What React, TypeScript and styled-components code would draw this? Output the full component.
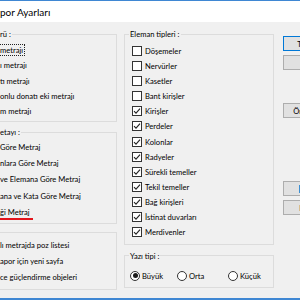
import styled, { createGlobalStyle } from 'styled-components';

const GlobalStyle = createGlobalStyle`
	html, body {
		margin: 0;
		padding: 0;
		overflow: hidden;
		background: #f0f0f0;
	}
	#root {
		width: 300px;
		height: 300px;
		overflow: hidden;
	}
`;

const Window = styled.div`
	width: 300px;
	height: 300px;
	box-sizing: border-box;
	display: flex;
	flex-direction: column;
	overflow: hidden;
	background: #f0f0f0;
	border-top: 1px solid #3f87d3;
	border-bottom: 2px solid #3f87d3;
	font-family: Lato, 'Noto Sans', sans-serif;
	font-size: 7.6px;
	color: #000;
`;

const TitleBar = styled.div`
	height: 21px;
	flex-shrink: 0;
	display: flex;
	align-items: center;
	background: #fff;
	font-size: 10px;
	white-space: nowrap;
`;

const Body = styled.div`
	flex: 1;
	display: flex;
	align-items: flex-start;
	padding-top: 7px;
`;

const LeftCol = styled.div`
	width: 129px;
	margin-left: -12px;
	flex-shrink: 0;
	display: flex;
	flex-direction: column;
`;

const MidCol = styled.div`
	width: 150px;
	margin-left: 7px;
	flex-shrink: 0;
	display: flex;
	flex-direction: column;
`;

const ButtonCol = styled.div`
	margin-left: 9px;
	padding-top: 7px;
	flex-shrink: 0;
	display: flex;
	flex-direction: column;
`;

const Group = styled.fieldset<{ $pt: number; $pb: number; $pl: number; $mt?: number }>`
	margin: ${(p) => p.$mt ?? 0}px 0 0 0;
	padding: ${(p) => p.$pt}px 0 ${(p) => p.$pb}px ${(p) => p.$pl}px;
	min-width: 0;
	border: 1px solid #dcdcdc;
	box-sizing: border-box;
`;

const Legend = styled.legend<{ $ml?: number }>`
	padding: 0 1px;
	margin-left: ${(p) => p.$ml ?? 0}px;
	line-height: 10px;
	white-space: nowrap;
`;

const Row = styled.div<{ $h: number }>`
	height: ${(p) => p.$h}px;
	display: flex;
	align-items: center;
	gap: 3px;
	white-space: nowrap;
`;

const Focused = styled.span`
	outline: 1px dotted #222;
	outline-offset: 0;
	line-height: 10px;
	padding-right: 1px;
`;

const Marked = styled.span`
	position: relative;
	&::after {
		content: '';
		position: absolute;
		left: 0;
		right: -3px;
		bottom: -3px;
		height: 2px;
		background: #e3141b;
	}
`;

const Box = styled.span`
	width: 10px;
	height: 10px;
	box-sizing: border-box;
	border: 1px solid #333;
	background: #fff;
	flex-shrink: 0;
	display: flex;
`;

const Radio = styled.span`
	width: 10px;
	height: 10px;
	box-sizing: border-box;
	border: 1px solid #333;
	border-radius: 50%;
	background: #fff;
	flex-shrink: 0;
	display: flex;
	align-items: center;
	justify-content: center;
`;

const Dot = styled.span`
	width: 5px;
	height: 5px;
	border-radius: 50%;
	background: #1a1a1a;
`;

const RadioRow = styled.div`
	height: 14px;
	display: flex;
	align-items: center;
	white-space: nowrap;
`;

const RadioItem = styled.label<{ $w: number }>`
	width: ${(p) => p.$w}px;
	display: flex;
	align-items: center;
	gap: 2px;
`;

const Button = styled.div<{ $default?: boolean; $mt: number; $start?: boolean }>`
	width: 52px;
	height: 15px;
	margin-top: ${(p) => p.$mt}px;
	box-sizing: border-box;
	display: flex;
	align-items: center;
	justify-content: ${(p) => (p.$start ? 'flex-start' : 'center')};
	padding-left: ${(p) => (p.$start ? 15 : 0)}px;
	gap: 2px;
	background: #e1e1e1;
	border: 1px solid ${(p) => (p.$default ? '#0078d7' : '#adadad')};
	white-space: nowrap;
`;

function Check() {
	return (
		<svg width="8" height="8" viewBox="0 0 8 8">
			<path d="M1 4.2 L3 6.2 L7 1.6" fill="none" stroke="#222" strokeWidth="1.1" />
		</svg>
	);
}

const reportTypes = ['ı metrajı', 'tı metrajı', 'onlu donatı eki metrajı', 'm metrajı'];
const details = ['Göre Metraj', 'nlara Göre Metraj', 've Elemana Göre Metraj', 'ana ve Kata Göre Metraj'];
const options = ['lı metrajda poz listesi', 'apor için yeni sayfa', 'ce güçlendirme objeleri'];

const elements: [string, boolean][] = [
	['Döşemeler', false],
	['Nervürler', false],
	['Kasetler', false],
	['Bant kirişler', false],
	['Kirişler', true],
	['Perdeler', true],
	['Kolonlar', true],
	['Radyeler', true],
	['Sürekli temeller', true],
	['Tekil temeller', true],
	['Bağ kirişleri', true],
	['İstinat duvarları', true],
	['Merdivenler', true],
];

export default function App() {
	return (
		<Window>
			<GlobalStyle />
			<TitleBar>por Ayarları</TitleBar>
			<Body>
				<LeftCol>
					<Group $pt={3.3} $pb={2.2} $pl={11}>
						<Legend $ml={-1}>rü :</Legend>
						<Row $h={15.3}>
							<Focused>metrajı</Focused>
						</Row>
						{reportTypes.map((t) => (
							<Row key={t} $h={15.3}>
								{t}
							</Row>
						))}
					</Group>
					<Group $pt={1.4} $pb={3} $pl={11} $mt={5.5}>
						<Legend $ml={-1}>etayı :</Legend>
						{details.map((t) => (
							<Row key={t} $h={16.2}>
								{t}
							</Row>
						))}
						<Row $h={16.2}>
							<Marked>ği Metraj</Marked>
						</Row>
					</Group>
					<Group $pt={4} $pb={4} $pl={11} $mt={8}>
						{options.map((t) => (
							<Row key={t} $h={16}>
								{t}
							</Row>
						))}
					</Group>
				</LeftCol>
				<MidCol>
					<Group $pt={4} $pb={3.5} $pl={7}>
						<Legend $ml={-3}>Eleman tipleri :</Legend>
						{elements.map(([name, on]) => (
							<Row key={name} $h={15.17}>
								<Box>{on && <Check />}</Box>
								{name}
							</Row>
						))}
					</Group>
					<Group $pt={8} $pb={4} $pl={5} $mt={6}>
						<Legend $ml={-1}>Yazı tipi :</Legend>
						<RadioRow>
							<RadioItem $w={47}>
								<Radio>
									<Dot />
								</Radio>
								Büyük
							</RadioItem>
							<RadioItem $w={51}>
								<Radio />
								Orta
							</RadioItem>
							<RadioItem $w={40}>
								<Radio />
								Küçük
							</RadioItem>
						</RadioRow>
					</Group>
				</MidCol>
				<ButtonCol>
					<Button $default $mt={0}>
						Tamam
					</Button>
					<Button $mt={4}>İptal</Button>
					<Button $mt={33}>Önizleme</Button>
					<Button $mt={63} $start>
						<svg width="8" height="8" viewBox="0 0 8 8">
							<rect x="0.5" y="0.5" width="7" height="7" fill="#8cc3ec" stroke="#3d8fd1" />
						</svg>
						Yazdır
					</Button>
					<Button $mt={4}>Kapat</Button>
				</ButtonCol>
			</Body>
		</Window>
	);
}
